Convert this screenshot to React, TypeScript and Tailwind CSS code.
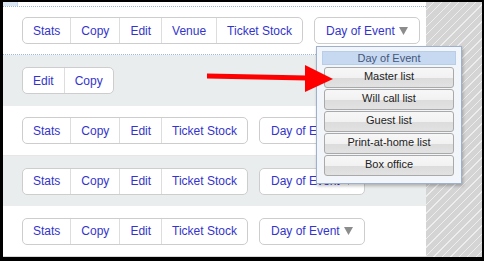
import React from 'react';

const Caret = () => (
    <svg width="9" height="8" viewBox="0 0 9 8" className="shrink-0">
        <polygon points="0,0 9,0 4.5,8" fill="#8c8c8c" />
    </svg>
);

const Group = ({ items }: { items: string[] }) => (
    <div className="flex h-[27px] shrink-0 whitespace-nowrap rounded-[5px] border border-[#cdcdcd] bg-white">
        {items.map((t, i) => (
            <span
                key={t}
                className={i ? 'flex items-center px-[10px] border-l border-[#dddddd]' : 'flex items-center px-[10px]'}
            >
                {t}
            </span>
        ))}
    </div>
);

const DayButton = () => (
    <div className="flex h-[27px] shrink-0 items-center gap-[4px] whitespace-nowrap rounded-[5px] border border-[#cdcdcd] bg-white px-[11px]">
        <span>Day of Event</span>
        <Caret />
    </div>
);

const menuItems = ['Master list', 'Will call list', 'Guest list', 'Print-at-home list', 'Box office'];

const App = () => {
    return (
        <div
            className="relative flex h-[261px] w-[484px] bg-black pl-[3px] pt-[2px] pr-[2px] pb-[4px] text-[12px] text-[#3434cc]"
            style={{ fontFamily: '"Liberation Sans", Arial, sans-serif' }}
        >
            {/* main table */}
            <div className="flex w-[423px] flex-col overflow-hidden bg-white">
                <div className="flex h-[4px]">
                    <div className="w-[15px] bg-[#dbe6f5] border-r border-[#c5d5ec]"></div>
                </div>
                <div className="flex h-[49px] items-center gap-[11px] border-y border-dotted border-[#9fb8e0] pl-[19px]">
                    <Group items={['Stats', 'Copy', 'Edit', 'Venue', 'Ticket Stock']} />
                    <DayButton />
                </div>
                <div className="flex h-[51px] items-center bg-[#eaeded] pl-[19px]">
                    <Group items={['Edit', 'Copy']} />
                </div>
                <div className="flex h-[50px] items-center gap-[11px] border-b border-[#e6e6e6] pl-[19px]">
                    <Group items={['Stats', 'Copy', 'Edit', 'Ticket Stock']} />
                    <DayButton />
                </div>
                <div className="flex h-[50px] items-center gap-[11px] bg-[#eaeded] pl-[19px]">
                    <Group items={['Stats', 'Copy', 'Edit', 'Ticket Stock']} />
                    <DayButton />
                </div>
                <div className="flex h-[50px] items-center gap-[11px] pl-[19px]">
                    <Group items={['Stats', 'Copy', 'Edit', 'Ticket Stock']} />
                    <DayButton />
                </div>
                <div className="flex-1 bg-[#d8d8d8]"></div>
            </div>

            {/* hatched side */}
            <div className="flex-1 bg-[image:repeating-linear-gradient(135deg,#d4d4d4_0_5px,#ededed_5px_6px)]"></div>

            {/* dropdown menu */}
            <div className="absolute left-[316px] top-[46px] flex h-[138px] w-[146px] flex-col border border-[#9fb0cc] bg-[#f2f5fa] px-[5px] pt-[4px] shadow-[1px_2px_3px_rgba(0,0,0,0.25)]">
                <div className="flex h-[14px] items-center justify-center border border-[#b8cde8] bg-[#c6d9f1] text-[11px] text-[#45557a]">
                    Day of Event
                </div>
                <div className="mt-[2px] flex flex-col gap-[1px] px-[2px]">
                    {menuItems.map(m => (
                        <div
                            key={m}
                            className="flex h-[21px] items-center justify-center rounded-[3px] border border-[#a9a9a9] bg-[linear-gradient(#f7f7f7_0,#f1f1f1_55%,#dcdcdc_55%,#e2e2e2_100%)] pb-[3px] text-[11px] text-[#222222]"
                        >
                            {m}
                        </div>
                    ))}
                </div>
            </div>

            {/* red arrow */}
            <svg className="pointer-events-none absolute left-0 top-0" width="484" height="261" viewBox="0 0 484 261">
                <polygon points="207,73.5 307,75.5 307,80.5 207,78.5" fill="#ff0000" />
                <polygon points="305,65 333,79 305,92" fill="#ff0000" />
            </svg>
        </div>
    );
};

export default App;
